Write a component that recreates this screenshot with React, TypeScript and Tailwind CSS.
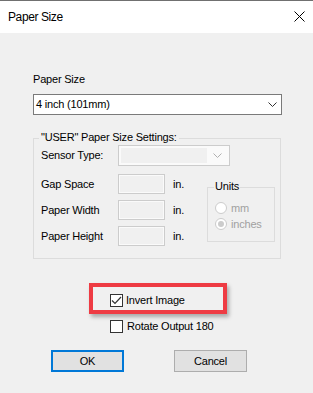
const font = { fontFamily: '"Liberation Sans", Arial, sans-serif' }

function Chevron({ color }: { color: string }) {
  return (
    <svg width="9" height="5" viewBox="0 0 9 5" fill="none">
      <path d="M0.5 0.5 L4.5 4.5 L8.5 0.5" stroke={color} strokeWidth="1" />
    </svg>
  )
}

function TextBox() {
  return <div className="w-[47px] h-[20px] border border-[#cccccc] bg-[#f0f0f0] shadow-[inset_0_0_0_1px_#fafafa]" />
}

function Field({ label }: { label: string }) {
  return (
    <div className="flex items-center h-[20px]">
      <span className="w-[77px]">{label}</span>
      <TextBox />
      <span className="ml-[8px]">in.</span>
    </div>
  )
}

function Radio({ label, checked }: { label: string; checked?: boolean }) {
  return (
    <div className="flex items-center h-[12px] gap-[4px]">
      <span className="w-[12px] h-[12px] rounded-full border border-[#cccccc] bg-white flex items-center justify-center">
        {checked && <span className="w-[6px] h-[6px] rounded-full bg-[#cccccc]" />}
      </span>
      <span className="text-[#a0a0a0]">{label}</span>
    </div>
  )
}

function CheckBox({ checked }: { checked?: boolean }) {
  return (
    <span className="w-[13px] h-[13px] border border-[#333333] bg-white flex items-center justify-center shrink-0">
      {checked && (
        <svg width="11" height="9" viewBox="0 0 11 9" fill="none">
          <path d="M1 4.5 L4 7.5 L10 1" stroke="#333333" strokeWidth="1.2" />
        </svg>
      )}
    </span>
  )
}

export default function App() {
  return (
    <div className="w-[313px] h-[393px] bg-[#f0f0f0] flex flex-col text-[11px] tracking-[-0.2px] text-black" style={font}>
      <div className="h-[33px] shrink-0 bg-white border-t border-[#707070] flex items-center justify-between pl-[8px] pr-[8px]">
        <span className="text-[12px] tracking-[-0.4px] pb-[1px]">Paper Size</span>
        <svg width="11" height="11" viewBox="0 0 11 11" fill="none" className="mb-[1px]">
          <path d="M0.5 0.5 L10.5 10.5 M10.5 0.5 L0.5 10.5" stroke="#000000" strokeWidth="1" />
        </svg>
      </div>

      <div className="flex flex-col pl-[33px]">
        <div className="mt-[40px] h-[13px] leading-[13px]">Paper Size</div>
        <div className="mt-[8px] w-[249px] h-[21px] border border-[#7a7a7a] bg-white flex items-center justify-between pl-[2px] pr-[4px]">
          <span>4 inch (101mm)</span>
          <Chevron color="#333333" />
        </div>

        <div className="relative mt-[23px] w-[248px] h-[121px] border border-[#dcdcdc] pt-[6px] pl-[7px]">
          <span className="absolute left-[5px] top-[-8px] px-[2px] bg-[#f0f0f0] leading-[13px]">"USER" Paper Size Settings:</span>
          <div className="flex items-center h-[21px]">
            <span className="w-[77px]">Sensor Type:</span>
            <div className="w-[112px] h-[21px] border border-[#cccccc] flex items-center p-[2px] bg-[#fafafa]">
              <div className="flex-1 h-full bg-[#f0f0f0]" />
              <div className="w-[20px] flex justify-center">
                <Chevron color="#b0b0b0" />
              </div>
            </div>
          </div>
          <div className="flex items-start mt-[8px]">
            <div className="flex flex-col gap-[6px] w-[166px]">
              <Field label="Gap Space" />
              <Field label="Paper Width" />
              <Field label="Paper Height" />
            </div>
            <div className="relative mt-[13px] w-[68px] h-[55px] border border-[#dcdcdc] pt-[14px] pl-[7px] flex flex-col gap-[4px]">
              <span className="absolute left-[6px] top-[-8px] px-[1px] bg-[#f0f0f0] leading-[13px]">Units</span>
              <Radio label="mm" />
              <Radio label="inches" checked />
            </div>
          </div>
        </div>

        <div className="mt-[24px] ml-[56px] w-[138px] h-[31px] border-[4px] border-[#ee3b43] shadow-[2px_3px_4px_rgba(0,0,0,0.3)] flex items-center pl-[17px] pt-[3px] gap-[3px]">
          <CheckBox checked />
          <span>Invert Image</span>
        </div>

        <div className="mt-[6px] ml-[77px] flex items-center gap-[4px] h-[13px]">
          <CheckBox />
          <span>Rotate Output 180</span>
        </div>

        <div className="mt-[17px] ml-[18px] flex gap-[50px]">
          <button className="w-[73px] h-[22px] border-2 border-[#0078d7] bg-[#e1e1e1] flex items-center justify-center">OK</button>
          <button className="w-[73px] h-[22px] border border-[#adadad] bg-[#e1e1e1] flex items-center justify-center">Cancel</button>
        </div>
      </div>
    </div>
  )
}
